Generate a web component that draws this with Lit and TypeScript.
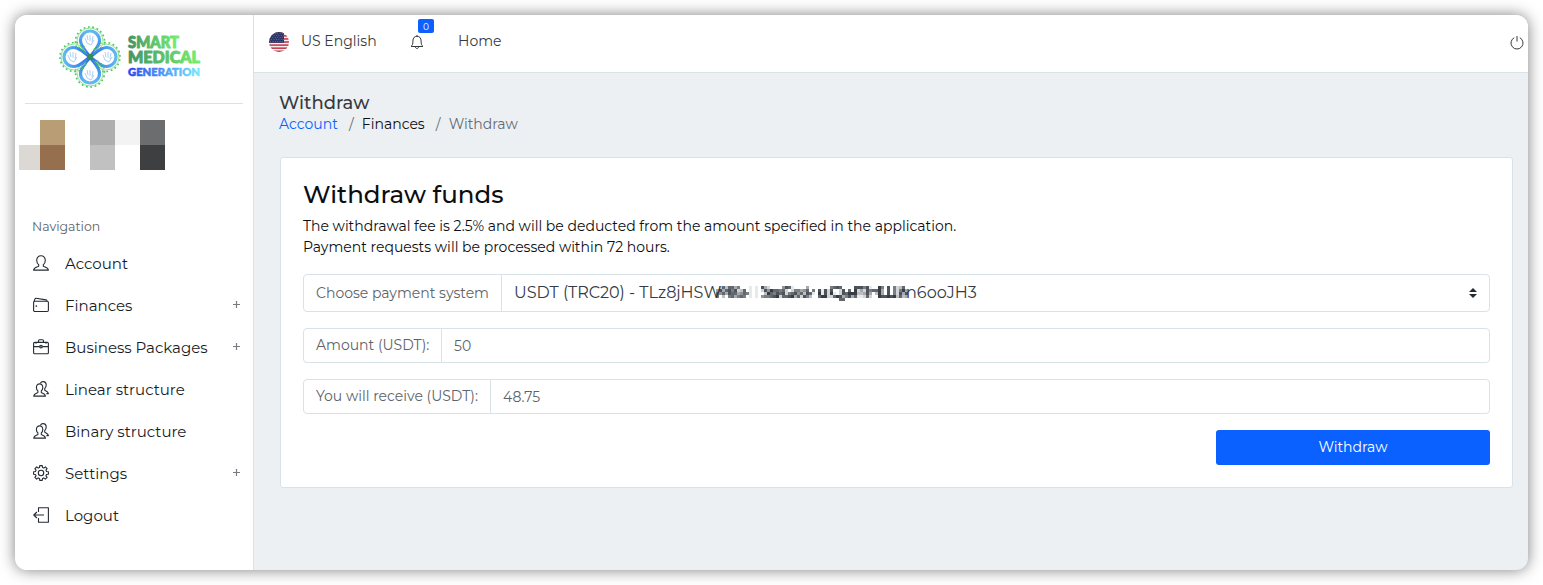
import { LitElement, html, svg, css } from "lit";
import { customElement } from "lit/decorators.js";

const person = svg`<path d="M8 .8c-2.600 0-4.300 1.800-4.300 4.400 0 1.800.8 3.600 2 4.500v1.500c-.5.7-4.900 1-5.100 3.900h14.800c-.2-2.900-4.600-3.200-5.100-3.900V9.700c1.200-.9 2-2.700 2-4.500C12.300 2.600 10.600.8 8 .8z"/>`;
const people = svg`<path d="M6.600 2.900C4.600 2.900 3.400 4.300 3.400 6.400c0 1.400.6 2.700 1.500 3.500v1.500c-.4.7-4 .9-4.200 3.700h11.800c-.2-2.800-3.800-3-4.200-3.700V9.900c.9-.8 1.500-2.100 1.500-3.500 0-2.100-1.200-3.500-3.200-3.500z"/><path d="M7.400 2.200C7.900 1.100 8.900.6 10 .6c2 0 3.200 1.400 3.200 3.500 0 1.400-.6 2.700-1.500 3.500V9c.4.700 3.500 1.100 3.700 3.600h-2"/>`;
const gearPath = (() => {
  const pts: string[] = [];
  for (let i = 0; i < 8; i++) {
    const a = (i * Math.PI) / 4;
    for (const [d, r] of [[-0.26, 5.7], [-0.17, 7.5], [0.17, 7.5], [0.26, 5.7]]) {
      pts.push(`${(8 + r * Math.sin(a + d)).toFixed(2)} ${(8 - r * Math.cos(a + d)).toFixed(2)}`);
    }
  }
  return "M" + pts.join("L") + "Z";
})();

const icons: Record<string, unknown> = {
  person,
  people,
  wallet: svg`<rect x=".6" y="4.300" width="14.800" height="10.200" rx="1.200"/><path d="M1.200 4.500C1.400 2.700 2 1.100 3.200 1.200l9.800 1.700c.8.1 1 .6 1 1.400"/><path d="M3.300 8.400v1.400" stroke-width="1.500"/>`,
  briefcase: svg`<rect x=".6" y="3.400" width="14.800" height="11.400" rx="1"/><path d="M5.500 3.300V1.800c0-.7.4-1 1-1h3c.6 0 1 .3 1 1v1.500M.6 7.600h5.600M9.800 7.600h5.600M3 3.800v1M13 3.800v1"/><circle cx="8" cy="7.600" r="1.400"/><path d="M8 6.200v2.800"/>`,
  gear: svg`<path d=${gearPath}/><circle cx="8" cy="8" r="2.700"/>`,
  logout: svg`<path d="M5.500 5V.8h9.900v14.400H5.500V11M11 8H.8M3.900 5L.8 8l3.100 3"/>`,
};

const nav = [
  { icon: "person", label: "Account", more: false },
  { icon: "wallet", label: "Finances", more: true },
  { icon: "briefcase", label: "Business Packages", more: true },
  { icon: "people", label: "Linear structure", more: false },
  { icon: "people", label: "Binary structure", more: false },
  { icon: "gear", label: "Settings", more: true },
  { icon: "logout", label: "Logout", more: false },
];

/* Each digit is the darkness of one 3px tile of the obscured wallet address. */
const mask = [
  ["03737746000", "1010", "842000", "0587100", "004000", "0000", "67870000", "88868100", "9608062", "370"],
  ["48478682370", "1010", "285977", "6720266", "457060", "8182", "80028070", "92428677", "9408062", "694"],
  ["75748774576", "1010", "039768", "7826785", "738710", "9182", "91028799", "93348403", "9408062", "848"],
  ["60306746760", "1010", "566789", "2778947", "286300", "7992", "27984684", "71127200", "9889893", "734"],
].map((parts) => parts.join(""));

@customElement("app-root")
class AppRoot extends LitElement {
  static styles = css`
    :host {
      display: block; box-sizing: border-box; height: 585px; padding: 15px;
      background: #fff; overflow: hidden;
      font-family: Montserrat, Inter, "Open Sans", sans-serif;
      font-size: 14px; line-height: 21px; color: #0b0e12;
    }
    * { box-sizing: border-box; }
    .window {
      display: grid; grid-template-columns: 239px 1fr; width: 1513px; height: 555px;
      border-radius: 12px; overflow: hidden; background: #ecf0f3; white-space: nowrap;
      box-shadow: 0 0 15px rgba(0, 0, 0, .5);
    }
    .side { background: #fff; border-right: 1px solid #d8e2e9; }
    .brand { height: 89px; margin: 0 10px; border-bottom: 1px solid #d8e2e9; padding: 11px 0 0 34px; }
    .brand svg { display: block; }
    .profile { display: block; margin: 16px 0 0 4px; }
    .caption { margin: 46px 0 5px 17px; font-size: 12.500px; color: #5e6368; }
    .item { display: flex; align-items: center; height: 42px; padding: 0 12px 0 18px; font-size: 15px; color: #161c26; }
    .item .icon { width: 16px; height: 16px; margin-right: 16px; fill: none; stroke: #252b34; stroke-width: 1.100; stroke-linejoin: round; }
    .plus { width: 9px; height: 9px; margin: -2px 0 0 auto; stroke: #777c82; stroke-width: 1.200; }
    .main { display: flex; flex-direction: column; min-width: 0; }
    .top { display: flex; align-items: center; height: 58px; background: #fff; border-bottom: 1px solid #d8e2e9; padding: 0 4px 4px 15px; color: #373a3d; }
    .flag { margin: 1px 12px 0 0; }
    .lang { width: 76px; }
    .bell { position: relative; width: 14px; height: 16px; margin: 1px 34px 0 33px; }
    .bell svg, .power { display: block; fill: none; stroke: #373a3d; stroke-width: 1; }
    .badge { position: absolute; left: 8px; top: -15px; width: 16px; height: 14px; border-radius: 2px; background: #0a61ff; color: #fff; font-size: 9px; line-height: 15px; text-align: center; }
    .power { margin: 2px 0 0 auto; }
    .page { padding: 19px 15px 0 26px; }
    .title { height: 22px; line-height: 22px; font-size: 18px; font-weight: 500; color: #373a3d; margin-left: -1px; }
    .crumbs { display: flex; margin-left: -1px; }
    .crumbs .link { color: #0a61ff; }
    .crumbs .sep { width: 24px; text-align: center; color: #646b73; padding-left: 3px; }
    .crumbs .now { color: #646b73; }
    .card { height: 331px; margin-top: 22px; background: #fff; border: 1px solid #d8e2e9; border-radius: 3px; padding: 22px; }
    .heading { margin: 0 0 8px; height: 28px; line-height: 28px; font-size: 24.500px; font-weight: 500; }
    .field { display: flex; height: 35px; margin-top: 16px; border: 1px solid #d8e2e9; border-radius: 4px; color: #5e6368; }
    .field.tall { height: 38px; }
    .field .name { display: flex; align-items: center; padding-left: 12px; border-right: 1px solid #d8e2e9; }
    .field .value { display: flex; flex: 1; align-items: center; padding: 1px 12px 0; }
    .n1 { width: 198px; } .n2 { width: 138px; } .n3 { width: 187px; }
    .field.small .name { padding-bottom: 1px; }
    .tall .value { font-size: 16px; color: #343b45; padding-top: 0; }
    .tall .value span { margin-top: -2px; }
    .tall .value .head { width: 202px; }
    .mask { position: relative; margin-right: -2px; fill: #202831; }
    .arrows { margin-left: auto; fill: #252b30; }
    .submit { display: block; width: 274px; height: 35px; margin: 16px 0 0 auto; padding: 0; border: 0; border-radius: 3px; background: #0a61ff; color: #fff; font: inherit; }
  `;

  logo() {
    const petal = (a: number) => svg`<g transform="rotate(${a} 31 31)">
      <path d="M24 27C17 23 16.500 20 16.500 15.500a14.500 14.500 0 0 1 29 0C45.500 20 45 23 38 27" fill="none" stroke="#4fc565" stroke-width="1.700" stroke-dasharray="1.800 2.600"/>
      <path d="M26 27C20 22 18 19.500 18 15a13 13 0 0 1 26 0C44 19.500 42 22 36 27" fill="none" stroke="#8fe58c" stroke-width="1"/>
      <path d="M31 31C27 25 21.500 20.500 21.500 14.500a9.500 9.500 0 0 1 19 0C40.500 20.500 35 25 31 31z" fill="#fff" stroke="url(#pg)" stroke-width="3.200"/>
      <path d="M31 31L21 20M31 31l10-11" stroke="#49bb78" stroke-width=".9"/>
    </g>`;
    const hand = (x: number, y: number) => svg`<path transform="translate(${x} ${y})" d="M-5-2l2 5 4 2 3-5M-3-5l1 5M0-5v6M3-4L2 2" fill="none" stroke="#a5c9f3" stroke-width=".9"/>`;
    return html`<svg width="144" height="64" viewBox="0 0 144 64">
      <defs>
        <linearGradient id="pg" x1="0" y1="0" x2="0" y2="1"><stop stop-color="#62baf0"/><stop offset="1" stop-color="#2868f2"/></linearGradient>
        <linearGradient id="gg"><stop stop-color="#459365"/><stop offset="1" stop-color="#75f06e"/></linearGradient>
        <linearGradient id="bg"><stop stop-color="#2547ef"/><stop offset="1" stop-color="#75eaff"/></linearGradient>
      </defs>
      ${[0, 90, 180, 270].map(petal)}
      ${hand(31, 14)}${hand(14, 31)}${hand(49, 31)}${hand(31, 49)}
      <rect x="28" y="28" width="6" height="6" rx="1.500" fill="#328b62"/>
      <g font-family="Lato, sans-serif" font-weight="900" stroke-width="1" stroke-linejoin="round">
        <text x="69" y="22.300" font-size="16.500" textLength="51" lengthAdjust="spacingAndGlyphs" fill="url(#gg)" stroke="url(#gg)">SMART</text>
        <text x="69" y="37.300" font-size="16.500" textLength="72" lengthAdjust="spacingAndGlyphs" fill="url(#gg)" stroke="url(#gg)">MEDICAL</text>
        <text x="69" y="50" font-size="12" stroke-width=".6" textLength="72" lengthAdjust="spacingAndGlyphs" fill="url(#bg)" stroke="url(#bg)">GENERATION</text>
      </g>
    </svg>`;
  }

  flag() {
    return html`<svg class="flag" width="20" height="20" viewBox="0 0 20 20">
      <defs><clipPath id="round"><circle cx="10" cy="10" r="10"/></clipPath></defs>
      <g clip-path="url(#round)">
        <rect width="20" height="20" fill="#f5eeee"/>
        ${[0, 1, 2, 3, 4, 5, 6].map((i) => svg`<rect y=${i * 3.08} width="20" height="1.540" fill="#c0384a"/>`)}
        <rect width="15" height="10.800" fill="#2b3768"/>
        ${[0, 1, 2, 3, 4].map((r) => [0, 1, 2, 3, 4, 5].map((c) => svg`<circle cx=${1.5 + c * 2.4 + (r % 2) * 1.2} cy=${1.4 + r * 2} r=".4" fill="#aab1ca"/>`))}
      </g>
    </svg>`;
  }

  render() {
    return html`<div class="window">
      <aside class="side">
        <div class="brand">${this.logo()}</div>
        <svg class="profile" width="146" height="50" shape-rendering="crispEdges">
          <rect x="21" width="25" height="25" fill="#b99d74"/><rect y="25" width="21" height="25" fill="#dcd9d5"/>
          <rect x="21" y="25" width="25" height="25" fill="#966f4e"/><rect x="71" width="25" height="25" fill="#aeaeae"/>
          <rect x="71" y="25" width="25" height="25" fill="#c1c1c1"/><rect x="96" width="25" height="25" fill="#f3f3f3"/>
          <rect x="121" width="25" height="25" fill="#6c6d6f"/><rect x="121" y="25" width="25" height="25" fill="#3e3f41"/>
        </svg>
        <div class="caption">Navigation</div>
        <nav>
          ${nav.map((n) => html`<div class="item">
            <svg class="icon" viewBox="0 0 16 16">${icons[n.icon]}</svg><span>${n.label}</span>
            ${n.more ? html`<svg class="plus" viewBox="0 0 9 9"><path d="M4.500 1v7M1 4.500h7"/></svg>` : ""}
          </div>`)}
        </nav>
      </aside>
      <section class="main">
        <header class="top">
          ${this.flag()}<span class="lang">US English</span>
          <div class="bell">
            <svg width="14" height="16" viewBox="0 0 14 16"><path d="M1 12.500c1.600-1.200 1.900-2.500 1.900-5.500 0-3 1.500-4.700 4.100-4.700s4.100 1.700 4.100 4.700c0 3 .3 4.300 1.900 5.500zM5.400 12.700c0 2.400 3.200 2.400 3.200 0M7 1v1.300"/></svg>
            <span class="badge">0</span>
          </div>
          <span>Home</span>
          <svg class="power" width="14" height="14" viewBox="0 0 14 14"><path d="M4.200 1.700a6 6 0 1 0 5.600 0M7 0v5.500"/></svg>
        </header>
        <div class="page">
          <div class="title">Withdraw</div>
          <div class="crumbs">
            <span class="link">Account</span><span class="sep">/</span>
            <span>Finances</span><span class="sep">/</span>
            <span class="now">Withdraw</span>
          </div>
          <div class="card">
            <div class="heading">Withdraw funds</div>
            <div>The withdrawal fee is 2.5% and will be deducted from the amount specified in the application.</div>
            <div>Payment requests will be processed within 72 hours.</div>
            <div class="field tall">
              <div class="name n1">Choose payment system</div>
              <div class="value">
                <span class="head">USDT (TRC20) - TLz8jHSW</span>
                <svg class="mask" width="192" height="18" viewBox="0 0 192 18" shape-rendering="crispEdges">
                  ${mask.map((row, y) => [...row].map((d, x) => svg`<rect x=${x * 3} y=${2 + y * 3} width="3" height="3" opacity=${(+d / 10).toFixed(1)}/>`))}
                  <rect x="123" y="14" width="6" height="3" opacity=".7"/>
                </svg>
                <span>n6ooJH3</span>
                <svg class="arrows" width="8" height="10" viewBox="0 0 8 10"><path d="M4 0l4 4H0zM4 10L0 6h8z"/></svg>
              </div>
            </div>
            <div class="field small">
              <div class="name n2">Amount (USDT):</div>
              <div class="value">50</div>
            </div>
            <div class="field small">
              <div class="name n3">You will receive (USDT):</div>
              <div class="value">48.75</div>
            </div>
            <button class="submit">Withdraw</button>
          </div>
        </div>
      </section>
    </div>`;
  }
}
